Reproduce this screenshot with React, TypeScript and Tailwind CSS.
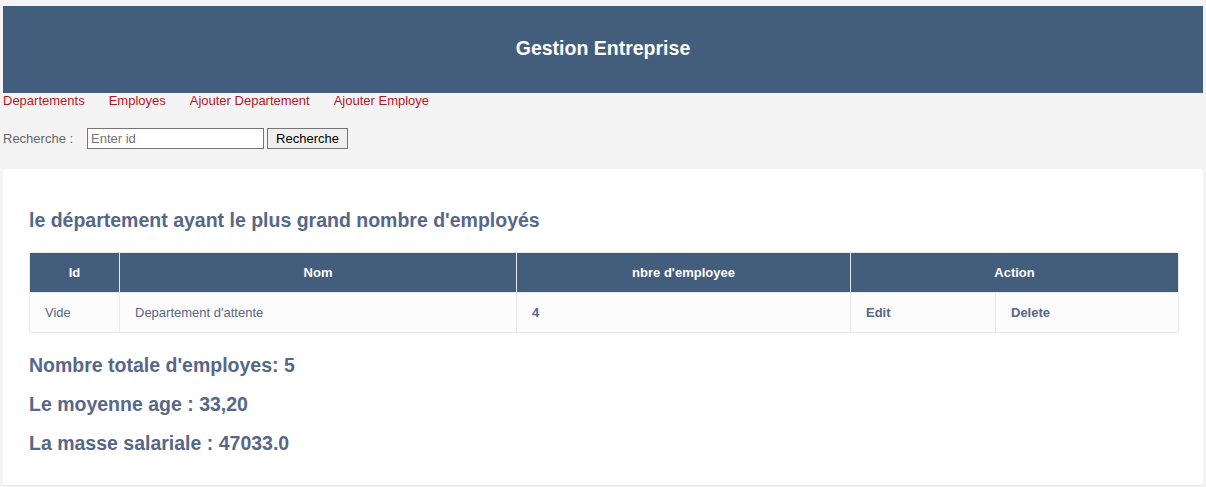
import React from "react";

const links = ["Departements", "Employes", "Ajouter Departement", "Ajouter Employe"];

export default function App() {
  return (
    <div className="min-h-screen bg-[#f4f4f4] px-[3px] pt-[6px] font-['Liberation_Sans',Arial,sans-serif]">
      <header className="flex h-[87px] items-center justify-center bg-[#435d7d] pb-[2px]">
        <h1 className="text-[19.5px] font-bold text-white">Gestion Entreprise</h1>
      </header>

      <nav className="flex gap-[24px] text-[13px] leading-[15px] text-[#b5161d]">
        {links.map((l) => (
          <a key={l} href="#">
            {l}
          </a>
        ))}
      </nav>

      <div className="mt-[20px] flex items-center text-[13px] text-[#666]">
        <span className="w-[84px]">Recherche :</span>
        <input
          className="h-[21px] w-[177px] border border-[#767676] bg-white px-[3px] text-[13px] text-black placeholder:text-[#757575]"
          placeholder="Enter id"
        />
        <button className="ml-[3px] h-[21px] w-[81px] border border-[#767676] bg-[#efefef] text-[13px] text-black">
          Recherche
        </button>
      </div>

      <main className="mt-[20px] rounded-[3px] bg-white px-[26px] pb-[30px] pt-[39px] shadow-[0_1px_1px_rgba(0,0,0,0.05)]">
        <h2 className="text-[19.5px] font-bold leading-[24px] text-[#566787]">
          le département ayant le plus grand nombre d'employés
        </h2>

        <table className="mt-[20px] w-[1149px] table-fixed border-collapse text-[13px] text-[#566787]">
          <colgroup>
            <col className="w-[90px]" />
            <col className="w-[397px]" />
            <col className="w-[334px]" />
            <col className="w-[145px]" />
            <col className="w-[183px]" />
          </colgroup>
          <thead>
            <tr className="h-[40px] bg-[#435d7d] text-white">
              <th className="border border-[#e9e9e9] font-bold">Id</th>
              <th className="border border-[#e9e9e9] font-bold">Nom</th>
              <th className="border border-[#e9e9e9] font-bold">nbre d'employee</th>
              <th colSpan={2} className="border border-[#e9e9e9] font-bold">
                Action
              </th>
            </tr>
          </thead>
          <tbody>
            <tr className="h-[40px] bg-[#fcfcfc]">
              <td className="border border-[#e9e9e9] px-[15px]">Vide</td>
              <td className="border border-[#e9e9e9] px-[15px]">Departement d'attente</td>
              <td className="border border-[#e9e9e9] px-[15px] font-bold">4</td>
              <td className="border border-[#e9e9e9] px-[15px] font-bold">Edit</td>
              <td className="border border-[#e9e9e9] px-[15px] font-bold">Delete</td>
            </tr>
          </tbody>
        </table>

        <div className="mt-[20px] flex flex-col gap-[15px] text-[19.5px] font-bold leading-[24px] text-[#566787]">
          <p>Nombre totale d'employes: 5</p>
          <p>Le moyenne age : 33,20</p>
          <p>La masse salariale : 47033.0</p>
        </div>
      </main>
    </div>
  );
}
